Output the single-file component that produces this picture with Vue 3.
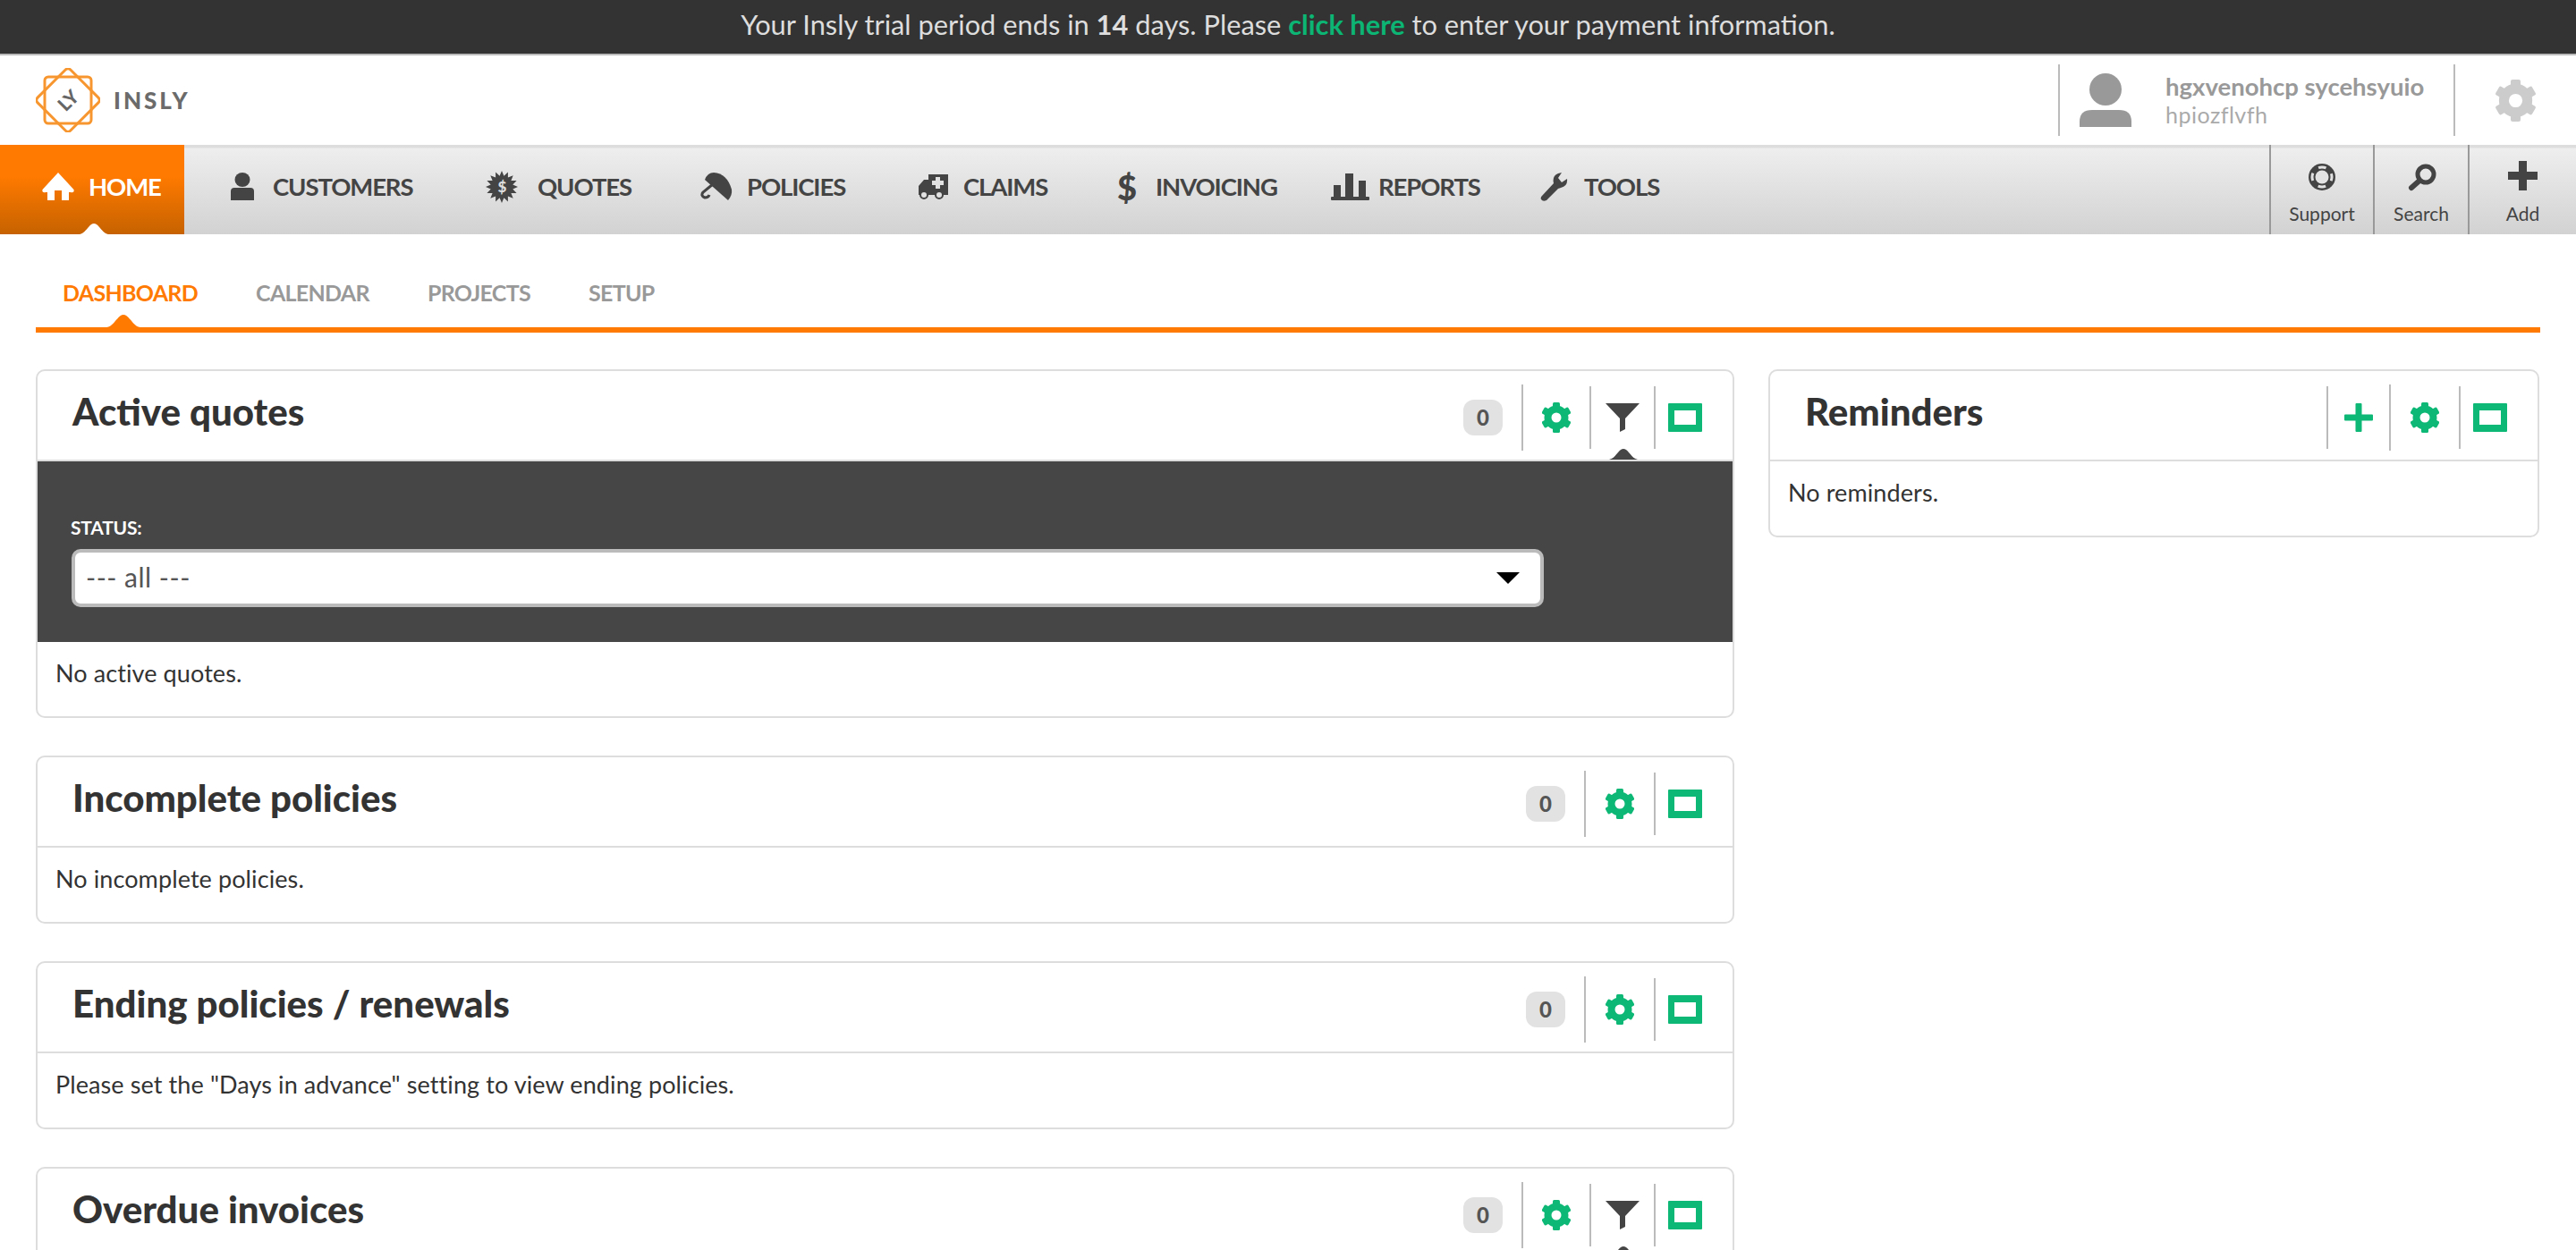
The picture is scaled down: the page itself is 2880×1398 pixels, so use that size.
<script setup>
const navItems = [
  { key: 'customers', label: 'CUSTOMERS', width: 285, cell: 47 },
  { key: 'quotes', label: 'QUOTES', width: 240, cell: 58 },
  { key: 'policies', label: 'POLICIES', width: 244, cell: 52 },
  { key: 'claims', label: 'CLAIMS', width: 222, cell: 50 },
  { key: 'invoicing', label: 'INVOICING', width: 239, cell: 43 },
  { key: 'reports', label: 'REPORTS', width: 234, cell: 53 },
  { key: 'tools', label: 'TOOLS', width: 140, cell: 49 },
]

const tabs = ['DASHBOARD', 'CALENDAR', 'PROJECTS', 'SETUP']

const leftCards = [
  { title: 'Active quotes', filter: true, open: true, text: 'No active quotes.' },
  { title: 'Incomplete policies', text: 'No incomplete policies.' },
  { title: 'Ending policies / renewals', text: 'Please set the "Days in advance" setting to view ending policies.' },
  { title: 'Overdue invoices', filter: true, cut: true },
]

// spiky badge behind the $ on the quotes icon
const starPoints = (() => {
  const pts = []
  for (let i = 0; i < 32; i++) {
    const r = i % 2 ? 12.5 : 18
    const a = (i * Math.PI) / 16
    pts.push((18 + r * Math.sin(a)).toFixed(1) + ',' + (18 - r * Math.cos(a)).toFixed(1))
  }
  return pts.join(' ')
})()
</script>

<template>
  <div class="page">
    <svg class="defs" width="0" height="0">
      <symbol id="gear" viewBox="0 0 32 34">
        <circle cx="16" cy="17" r="9.5" fill="none" stroke="currentColor" stroke-width="8" />
        <rect x="12" y="0" width="8" height="8" rx="1.5" fill="currentColor" />
        <rect x="12" y="0" width="8" height="8" rx="1.5" fill="currentColor" transform="rotate(60 16 17)" />
        <rect x="12" y="0" width="8" height="8" rx="1.5" fill="currentColor" transform="rotate(120 16 17)" />
        <rect x="12" y="0" width="8" height="8" rx="1.5" fill="currentColor" transform="rotate(180 16 17)" />
        <rect x="12" y="0" width="8" height="8" rx="1.5" fill="currentColor" transform="rotate(240 16 17)" />
        <rect x="12" y="0" width="8" height="8" rx="1.5" fill="currentColor" transform="rotate(300 16 17)" />
      </symbol>
      <symbol id="caret" viewBox="0 0 32 12">
        <path d="M0 12C5 11 7 7 10 4C12 1.500 14 0 16 0C18 0 20 1.500 22 4C25 7 27 11 32 12Z" fill="currentColor" />
      </symbol>
    </svg>

    <div class="trial">
      Your Insly trial period ends in <b>14</b> days. Please <a class="trial-link">click here</a> to enter your payment information.
    </div>

    <header class="head">
      <div class="logo">
        <svg width="72" height="72" viewBox="0 0 72 72">
          <rect x="10" y="10" width="52" height="52" rx="4" fill="none" stroke="#f7962e" stroke-width="3" />
          <rect x="10" y="10" width="52" height="52" rx="4" fill="none" stroke="#f7962e" stroke-width="3" transform="rotate(45 36 36)" />
          <text x="36" y="44" text-anchor="middle" class="logo-mark" transform="rotate(-45 36 36)">LY</text>
        </svg>
        <span class="logo-name">INSLY</span>
      </div>
      <div class="user">
        <svg width="60" height="60" viewBox="0 0 60 60" class="avatar">
          <circle cx="30" cy="18" r="18" fill="#999" />
          <path d="M1 60V54Q1 41 15 41H45Q59 41 59 54V60Z" fill="#999" />
        </svg>
        <div class="user-text">
          <div class="user-name">hgxvenohcp sycehsyuio</div>
          <div class="user-sub">hpiozflvfh</div>
        </div>
      </div>
      <div class="head-gear">
        <svg width="45" height="47"><use href="#gear" /></svg>
      </div>
    </header>

    <nav class="nav">
      <a class="nav-home">
        <svg class="nav-ico" width="36" height="31" viewBox="0 0 36 31">
          <path d="M18 0L35.500 19Q36.500 23 32 22L30 22V31H22V20H14V31H6V22H4Q-.5 23 .5 19Z" fill="#fff" />
        </svg>
        <span>HOME</span>
        <svg class="home-caret" width="32" height="12"><use href="#caret" /></svg>
      </a>

      <a v-for="item in navItems" :key="item.key" class="nav-item" :style="{ width: item.width + 'px' }">
        <span class="nav-cell" :style="{ width: item.cell + 'px' }">
          <svg v-if="item.key === 'customers'" width="26" height="31" viewBox="0 0 26 31">
            <ellipse cx="13" cy="8" rx="8.500" ry="8" />
            <path d="M0 31V21Q0 17 4 17H22Q26 17 26 21V31Z" />
          </svg>
          <svg v-else-if="item.key === 'quotes'" width="36" height="36" viewBox="0 0 36 36">
            <polygon :points="starPoints" />
            <text x="18" y="24" text-anchor="middle" class="star-sign">$</text>
          </svg>
          <svg v-else-if="item.key === 'policies'" width="36" height="31" viewBox="0 0 36 31">
            <path d="M5 8Q8 0 15 0Q30 1 35 19Q36 25 31 31Z" />
            <path d="M14 13L3 22Q0 26 5 28Q9 28 10 25" fill="none" stroke="#444" stroke-width="3" />
          </svg>
          <svg v-else-if="item.key === 'claims'" width="33" height="28" viewBox="0 0 33 28">
            <path d="M11 0H33V23H0V13L6 6H11Z" />
            <path d="M19 3H24V7H28V12H24V16H19V12H15V7H19Z" fill="#e2e2e2" />
            <circle cx="6" cy="23" r="4" fill="#e2e2e2" stroke="#444" stroke-width="2" />
            <circle cx="23" cy="23" r="4" fill="#e2e2e2" stroke="#444" stroke-width="2" />
          </svg>
          <span v-else-if="item.key === 'invoicing'" class="dollar">$</span>
          <svg v-else-if="item.key === 'reports'" width="43" height="30" viewBox="0 0 43 30">
            <rect x="3" y="13" width="8" height="14" />
            <rect x="16" y="0" width="9" height="27" />
            <rect x="31" y="8" width="8" height="19" />
            <rect x="0" y="26" width="43" height="4" rx="1" />
          </svg>
          <svg v-else width="32" height="32" viewBox="0 0 32 32">
            <path d="M2 26L15 12Q13 4 20 1L24 0L20 6L24 11L30 7Q31 15 23 17L20 18L7 31Q3 33 1 30Q0 28 2 26Z" />
          </svg>
        </span>
        <span>{{ item.label }}</span>
      </a>

      <div class="nav-tools">
        <a class="tool tool-support">
          <svg width="30" height="30" viewBox="0 0 30 30">
            <circle cx="15" cy="15" r="15" fill="#444" />
            <circle cx="15" cy="15" r="7.500" fill="#e2e2e2" />
            <circle cx="15" cy="15" r="11" fill="none" stroke="#e2e2e2" stroke-width="3" stroke-dasharray="8.64 8.64" stroke-dashoffset="4.32" />
          </svg>
          <span>Support</span>
        </a>
        <a class="tool tool-search">
          <svg width="33" height="32" viewBox="0 0 33 32">
            <circle cx="21" cy="12" r="9" fill="none" stroke="#444" stroke-width="5" />
            <path d="M14 19L5 27" stroke="#444" stroke-width="6" stroke-linecap="round" />
          </svg>
          <span>Search</span>
        </a>
        <a class="tool tool-add">
          <svg width="33" height="33" viewBox="0 0 33 33">
            <path d="M12 0H21V12H33V21H21V33H12V21H0V12H12Z" fill="#444" />
          </svg>
          <span>Add</span>
        </a>
      </div>
    </nav>

    <main class="main">
      <div class="tabs">
        <a v-for="(tab, i) in tabs" :key="tab" class="tab" :class="{ active: i === 0 }">{{ tab }}</a>
        <svg class="tab-caret" width="38" height="14"><use href="#caret" /></svg>
      </div>

      <div class="columns">
        <div class="col">
          <section v-for="card in leftCards" :key="card.title" class="card" :class="{ cut: card.cut }">
            <div class="card-head">
              <h2 class="card-title">{{ card.title }}</h2>
              <span class="badge">0</span>
              <a class="act act-gear" :class="{ narrow: card.filter }"><svg width="32" height="34"><use href="#gear" /></svg></a>
              <a v-if="card.filter" class="act act-filter">
                <svg width="38" height="32" viewBox="0 0 38 32">
                  <path d="M0 0H38L22 17V29L16 32V17Z" fill="#444" />
                </svg>
                <svg class="filter-caret" width="32" height="12"><use href="#caret" /></svg>
              </a>
              <a class="act act-win"><span class="win"></span></a>
            </div>
            <div v-if="card.open" class="panel">
              <label class="panel-label">STATUS:</label>
              <div class="select-wrap">
                <select class="select">
                  <option>--- all ---</option>
                </select>
                <span class="select-arrow"></span>
              </div>
            </div>
            <div v-if="card.text" class="card-body">{{ card.text }}</div>
          </section>
        </div>

        <div class="col">
          <section class="card">
            <div class="card-head">
              <h2 class="card-title">Reminders</h2>
              <a class="act act-plus">
                <svg width="32" height="32" viewBox="0 0 32 32">
                  <path d="M12.500 1Q12.500 0 13.500 0H18.500Q19.500 0 19.500 1V12.500H31Q32 12.500 32 13.500V18.500Q32 19.500 31 19.500H19.500V31Q19.500 32 18.500 32H13.500Q12.500 32 12.500 31V19.500H1Q0 19.500 0 18.500V13.500Q0 12.500 1 12.500H12.500Z" fill="#0db775" />
                </svg>
              </a>
              <a class="act act-gear"><svg width="32" height="34"><use href="#gear" /></svg></a>
              <a class="act act-win"><span class="win"></span></a>
            </div>
            <div class="card-body">No reminders.</div>
          </section>
        </div>
      </div>
    </main>
  </div>
</template>

<style scoped>
.page {
  width: 2880px;
  height: 1398px;
  overflow: hidden;
  background: #fff;
  font-family: Lato, "Open Sans", sans-serif;
  color: #333;
}

.defs {
  position: absolute;
}

a {
  color: inherit;
  text-decoration: none;
}

.trial {
  height: 60px;
  line-height: 55px;
  background: #333;
  border-bottom: 2px solid #bbb;
  color: #ddd;
  text-align: center;
  font-size: 30.800px;
}

.trial b {
  font-weight: 700;
}

.trial-link {
  color: #0cb574;
  font-weight: 700;
}

.head {
  height: 100px;
  display: flex;
  align-items: center;
}

.logo {
  display: flex;
  align-items: center;
  margin-left: 40px;
  flex: 1;
}

.logo-mark {
  font-size: 21px;
  font-weight: 900;
  fill: #666;
}

.logo-name {
  margin-left: 15px;
  font-size: 26px;
  font-weight: 900;
  letter-spacing: 3px;
  color: #6b6b6b;
}

.user {
  width: 444px;
  height: 80px;
  display: flex;
  align-items: center;
  box-sizing: border-box;
  border-left: 2px solid #bbb;
  border-right: 2px solid #bbb;
}

.avatar {
  margin-left: 21px;
}

.user-text {
  margin-left: 37px;
  margin-top: -3px;
}

.user-name {
  font-size: 27.500px;
  font-weight: 700;
  line-height: 34px;
  color: #999;
}

.user-sub {
  font-size: 25px;
  letter-spacing: .5px;
  line-height: 28px;
  color: #aaa;
}

.head-gear {
  width: 135px;
  display: flex;
  justify-content: center;
  color: #ccc;
}

.nav {
  height: 100px;
  display: flex;
  background: linear-gradient(#ddd 0, #ddd 3px, #eee 4px, #d2d2d2 100%);
  color: #444;
  font-size: 27.500px;
  letter-spacing: -1.100px;
  font-weight: 700;
}

.nav svg {
  fill: #444;
}

.nav-home {
  position: relative;
  width: 206px;
  margin-right: 52px;
  box-sizing: border-box;
  padding: 0 0 7px 47px;
  display: flex;
  align-items: center;
  gap: 16px;
  color: #fff;
  background: linear-gradient(#ff7a00 35%, #c66200);
}

.nav-home .nav-ico {
  fill: #fff;
}

.home-caret {
  position: absolute;
  left: 89px;
  bottom: 0;
  color: #fff;
}

.nav-item {
  display: flex;
  align-items: center;
  padding-bottom: 7px;
}

.nav-cell {
  display: flex;
  align-items: center;
  flex: none;
  height: 36px;
}

.star-sign {
  font-size: 17px;
  font-weight: 900;
  fill: #ddd;
}

.dollar {
  font-size: 38px;
  font-weight: 900;
  line-height: 36px;
}

.nav-tools {
  margin-left: auto;
  display: flex;
  font-size: 21px;
  font-weight: 400;
  letter-spacing: 0;
}

.tool {
  box-sizing: border-box;
  display: flex;
  flex-direction: column;
  align-items: center;
  border-left: 2px solid #999;
  position: relative;
}

.tool span {
  position: absolute;
  top: 64px;
}

.tool-support {
  width: 116px;
  padding-top: 21px;
}

.tool-search {
  width: 106px;
  padding-top: 21px;
}

.tool-add {
  width: 121px;
  padding-top: 18px;
}

.main {
  padding: 0 40px;
}

.tabs {
  position: relative;
  height: 110px;
  box-sizing: border-box;
  padding: 50px 0 0 30px;
  display: flex;
  gap: 65px;
  border-bottom: 6px solid #ff7a00;
  font-size: 25px;
  letter-spacing: -.7px;
  font-weight: 700;
  color: #999;
}

.tab.active {
  color: #ff7a00;
}

.tab-caret {
  position: absolute;
  left: 79px;
  bottom: 0;
  color: #ff7a00;
}

.columns {
  display: grid;
  grid-template-columns: 1899px 862px;
  column-gap: 38px;
  margin-top: 41px;
}

.col {
  display: flex;
  flex-direction: column;
  gap: 42px;
}

.card {
  border: 2px solid #ddd;
  border-radius: 10px;
}

.card.cut {
  height: 300px;
}

.card-head {
  position: relative;
  height: 101px;
  box-sizing: border-box;
  display: flex;
  align-items: center;
  border-bottom: 2px solid #ddd;
  padding-left: 39px;
}

.card-title {
  margin: 0 auto 10px 0;
  font-size: 42px;
  font-weight: 900;
  color: #333;
}

.badge {
  width: 44px;
  height: 40px;
  margin: 4px 21px 0 0;
  border-radius: 12px;
  background: #e2e2e2;
  color: #555;
  font-size: 24px;
  font-weight: 900;
  line-height: 40px;
  text-align: center;
}

.act {
  position: relative;
  box-sizing: border-box;
  height: 70px;
  margin-top: 4px;
  display: flex;
  align-items: center;
  justify-content: center;
  border-left: 2px solid #bbb;
  color: #0db775;
}

.act-gear {
  width: 78px;
  height: 74px;
}

.act-gear.narrow {
  width: 76px;
}

.act-filter {
  width: 72px;
}

.act-plus {
  width: 70px;
}

.act-win {
  width: 88px;
  justify-content: flex-start;
  padding-left: 14px;
}

.win {
  flex: none;
  box-sizing: border-box;
  width: 38px;
  height: 32px;
  border-style: solid;
  border-color: #0db775;
  border-width: 8px 7px;
  border-radius: 1px;
}

.filter-caret {
  position: absolute;
  left: 20px;
  bottom: -12px;
  color: #464646;
}

.panel {
  height: 202px;
  box-sizing: border-box;
  padding: 62px 0 0 37px;
  background: #464646;
}

.panel-label {
  display: block;
  height: 24px;
  line-height: 24px;
  font-size: 21px;
  letter-spacing: -.2px;
  font-weight: 700;
  color: #fff;
}

.select-wrap {
  position: relative;
  width: 1646px;
  margin: 12px 0 0 1px;
}

.select {
  appearance: none;
  display: block;
  width: 100%;
  height: 65px;
  box-sizing: border-box;
  padding: 0 12px 3px;
  border: 4px solid #bbb;
  border-radius: 10px;
  background: #fff;
  font-family: inherit;
  font-size: 30px;
  letter-spacing: .5px;
  color: #555;
}

.select-arrow {
  position: absolute;
  right: 27px;
  top: 26px;
  border-style: solid;
  border-width: 13px 13px 0;
  border-color: #000 transparent transparent;
}

.card-body {
  height: 83px;
  box-sizing: border-box;
  padding: 17px 20px 0;
  line-height: 36px;
  font-size: 27px;
  letter-spacing: .1px;
  color: #333;
}
</style>

<style>
html,
body {
  margin: 0;
  overflow: hidden;
  background: #fff;
}
</style>
